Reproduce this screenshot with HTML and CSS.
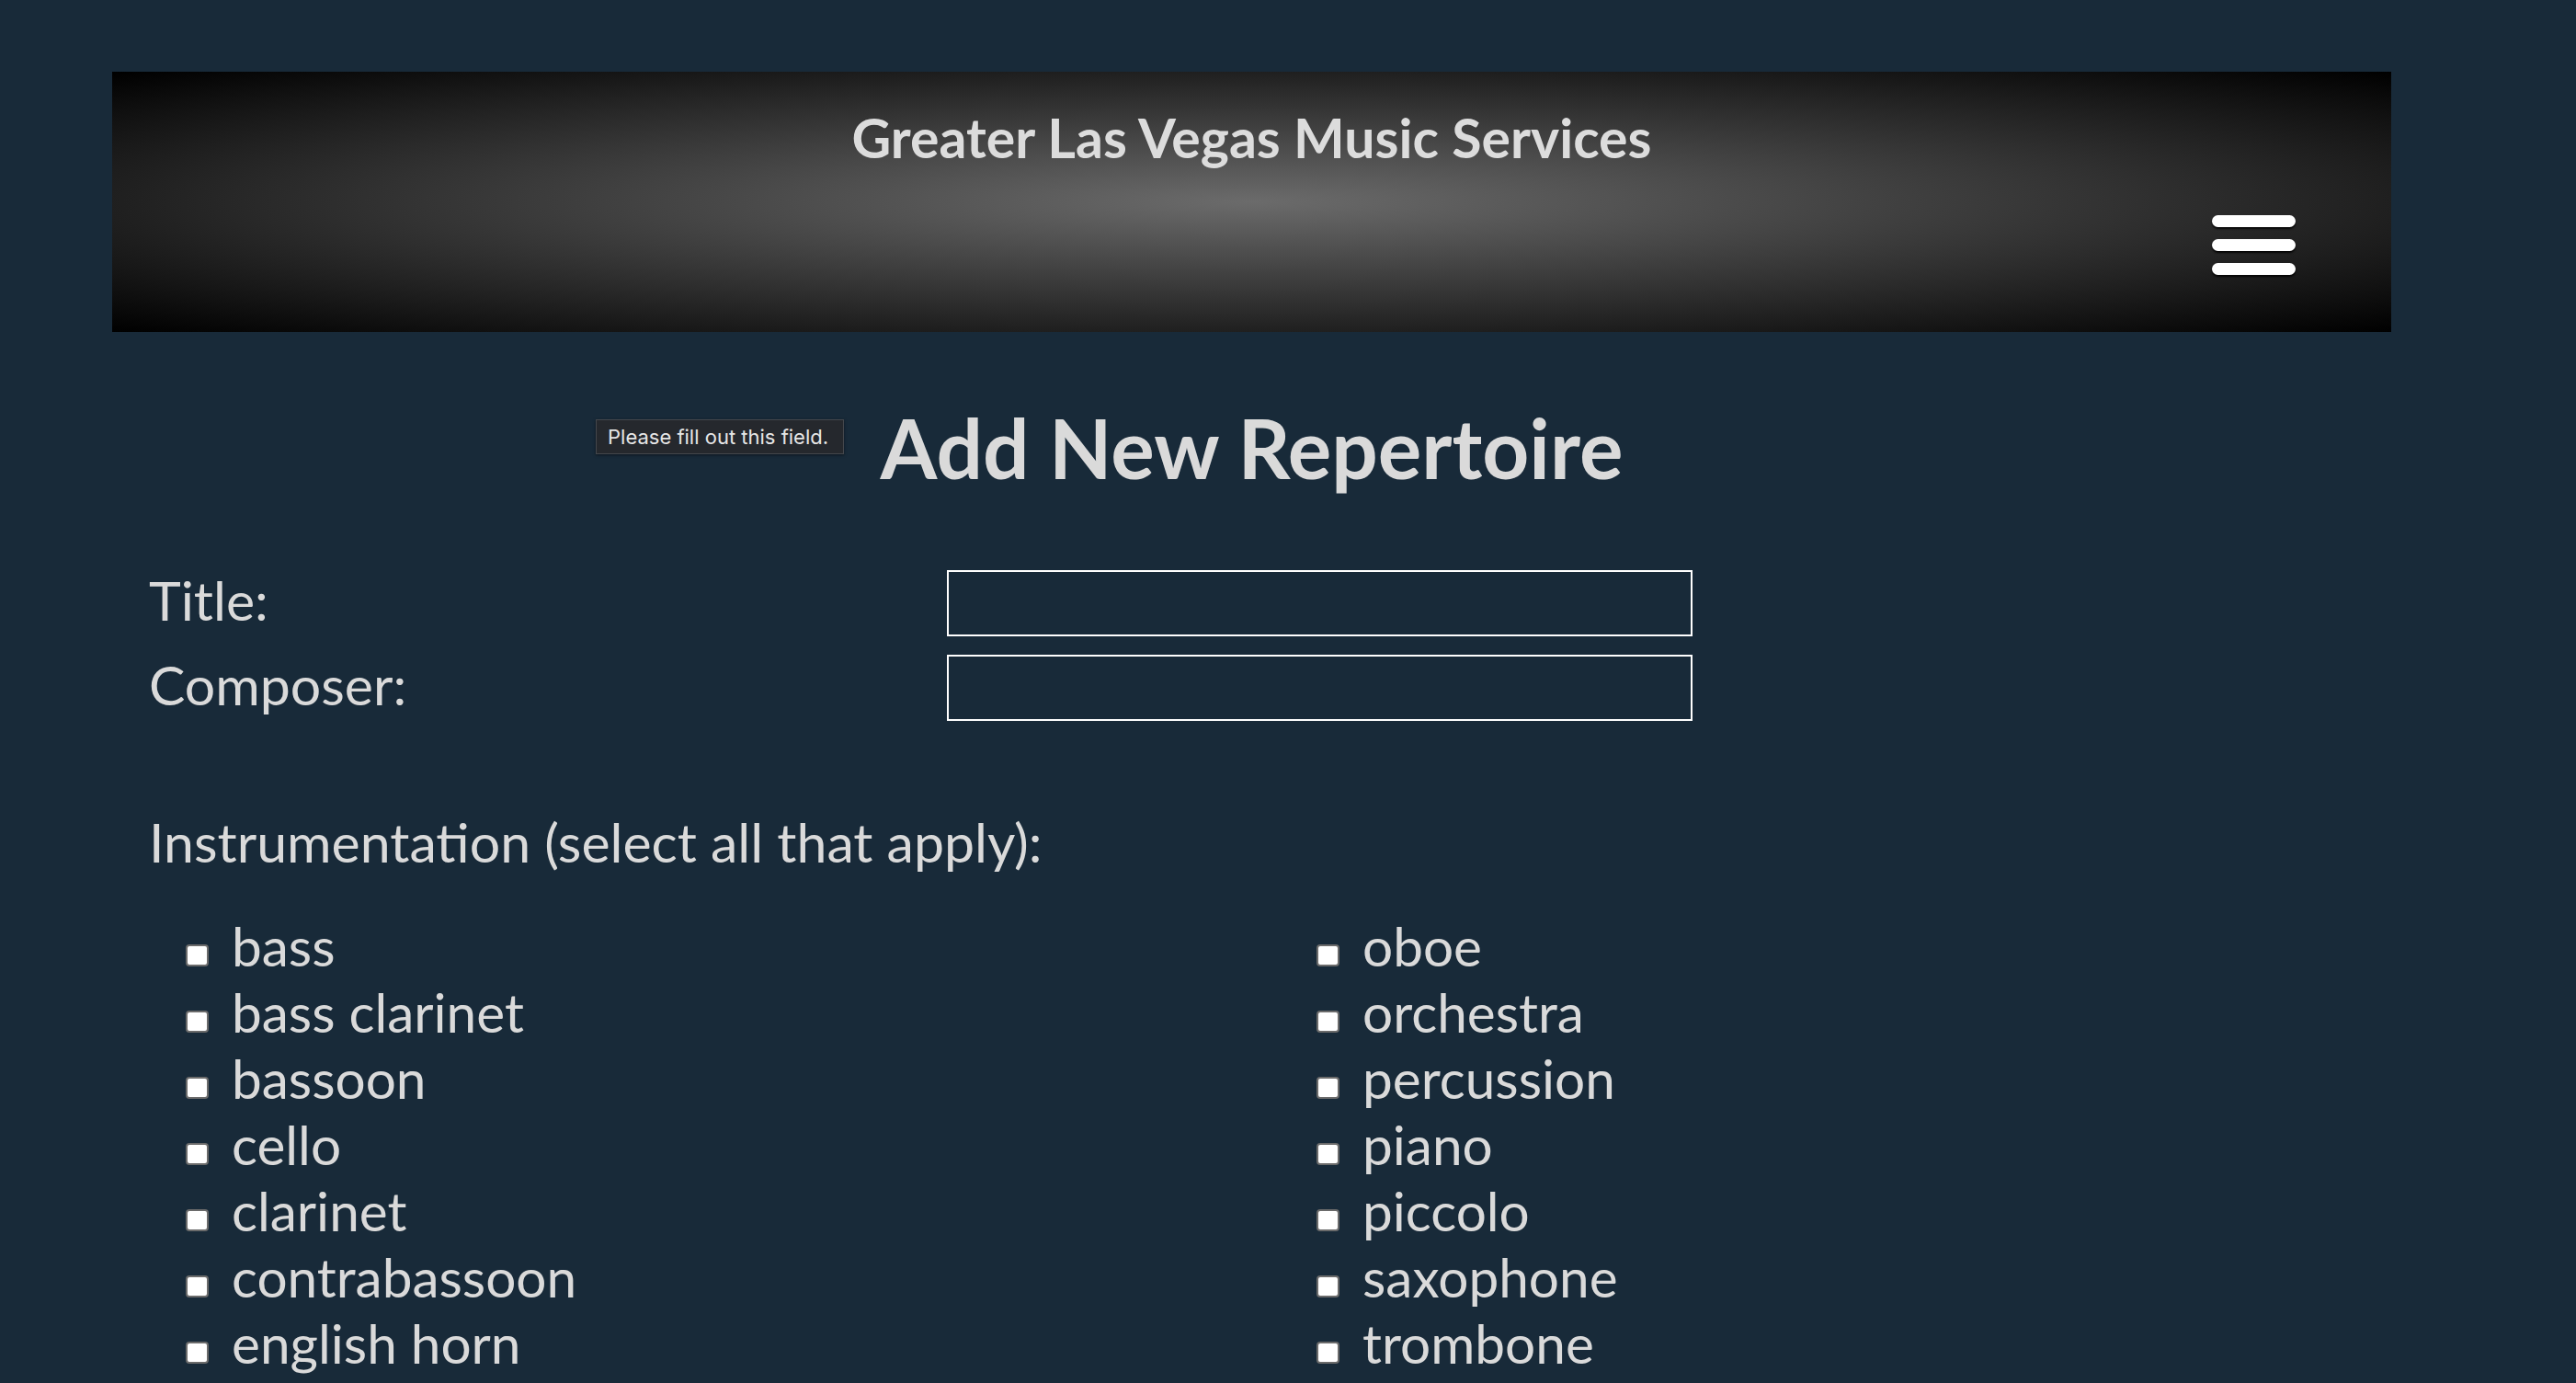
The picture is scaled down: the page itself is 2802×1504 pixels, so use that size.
FILE: index.html
```html
<!DOCTYPE html>
<html lang="en">
<head>
<meta charset="utf-8">
<title>Add New Repertoire</title>
<link rel="stylesheet" href="styles.css">
</head>
<body>
<div class="page">
  <header class="banner">
    <h1 class="site-title">Greater Las Vegas Music Services</h1>
    <div class="nav-row">
      <button class="menu-btn" aria-label="Menu"><span></span><span></span><span></span></button>
    </div>
  </header>
  <main class="content">
    <h2 class="page-title">Add New Repertoire</h2>
    <div class="tooltip">Please fill out this field.</div>
    <form class="rep-form">
      <div class="field-row">
        <label class="field-label" for="title">Title:</label>
        <input class="field-input" id="title" type="text">
      </div>
      <div class="field-row">
        <label class="field-label" for="composer">Composer:</label>
        <input class="field-input" id="composer" type="text">
      </div>
      <p class="instr-label">Instrumentation (select all that apply):</p>
      <div class="instr-grid">
        <ul class="instr-col">
          <li><span class="cb"></span>bass</li>
          <li><span class="cb"></span>bass clarinet</li>
          <li><span class="cb"></span>bassoon</li>
          <li><span class="cb"></span>cello</li>
          <li><span class="cb"></span>clarinet</li>
          <li><span class="cb"></span>contrabassoon</li>
          <li><span class="cb"></span>english horn</li>
        </ul>
        <ul class="instr-col">
          <li><span class="cb"></span>oboe</li>
          <li><span class="cb"></span>orchestra</li>
          <li><span class="cb"></span>percussion</li>
          <li><span class="cb"></span>piano</li>
          <li><span class="cb"></span>piccolo</li>
          <li><span class="cb"></span>saxophone</li>
          <li><span class="cb"></span>trombone</li>
        </ul>
      </div>
    </form>
  </main>
</div>
</body>
</html>
```
FILE: styles.css
```css
html, body {
  margin: 0;
  padding: 0;
}
body {
  background: #182a39;
  color: #dadada;
  font-family: Lato, "Open Sans", sans-serif;
  overflow: hidden;
  height: 1504px;
}
.page {
  position: relative;
  width: 2479px;
  margin-left: 122px;
  padding-top: 78px;
}
.banner {
  height: 283px;
  box-sizing: border-box;
  padding: 42px 104px 0;
  background: radial-gradient(ellipse at center, #6b6b6b 0%, #000 100%);
}
.site-title {
  margin: 0;
  text-align: center;
  font-size: 59px;
  line-height: 60px;
  font-weight: 700;
  color: #dcdcdc;
}
.nav-row {
  display: flex;
  justify-content: flex-end;
  margin-top: 54px;
}
.menu-btn {
  display: flex;
  flex-direction: column;
  gap: 13px;
  padding: 0;
  border: 0;
  background: none;
  width: 91px;
}
.menu-btn span {
  display: block;
  height: 13px;
  border-radius: 7px;
  background: #fff;
  box-shadow: 0 2px 2px rgba(0,0,0,0.85);
}
.content {
  position: relative;
  padding-top: 82px;
}
.page-title {
  margin: 0;
  text-align: center;
  font-size: 89px;
  line-height: 88px;
  font-weight: 700;
  color: #dadada;
}
.tooltip {
  position: absolute;
  left: 526px;
  top: 95px;
  width: 270px;
  height: 38px;
  box-sizing: border-box;
  border: 1px solid #44474c;
  background: #25282d;
  color: #e6e6e6;
  font-family: Inter, sans-serif;
  font-size: 22px;
  line-height: 36px;
  padding-left: 12px;
  white-space: nowrap;
  box-shadow: 0 1px 3px rgba(0,0,0,0.5);
}
.rep-form {
  margin-top: 89px;
  padding-left: 40px;
}
.field-row {
  display: flex;
  align-items: flex-start;
  margin-bottom: 20px;
}
.field-label {
  width: 868px;
  font-size: 59px;
  line-height: 66px;
  font-weight: 400;
}
.field-input {
  width: 811px;
  height: 72px;
  box-sizing: border-box;
  border: 2px solid #fff;
  background: transparent;
  margin: 0;
  padding: 0 10px;
  color: #fff;
  font-size: 40px;
  outline: none;
}
.instr-label {
  margin: 96px 0 0;
  font-size: 59px;
  line-height: 72px;
  font-weight: 400;
}
.instr-grid {
  display: grid;
  grid-template-columns: 1230px 1230px;
  margin-top: 40px;
  padding-left: 40px;
}
.instr-col {
  list-style: none;
  margin: 0;
  padding: 0;
}
.instr-col li {
  font-size: 58.5px;
  line-height: 72px;
}
.cb {
  display: inline-block;
  width: 25px;
  height: 24px;
  box-sizing: border-box;
  border: 2px solid #6b6b6b;
  border-radius: 4px;
  background: #fff;
  margin-right: 25px;
  vertical-align: baseline;
}
```
